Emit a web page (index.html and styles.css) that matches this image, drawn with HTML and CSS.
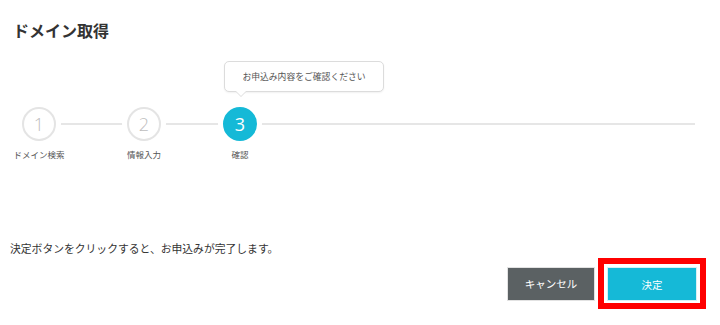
FILE: index.html
```html
<!DOCTYPE html>
<html lang="ja">
<head>
<meta charset="utf-8">
<link rel="stylesheet" href="styles.css">
</head>
<body>
<div class="page">
  <h1 class="title">ドメイン取得</h1>
  <div class="stepper">
    <div class="step step-wide">
      <div class="circle">1</div>
      <div class="label">ドメイン検索</div>
    </div>
    <div class="step">
      <div class="circle">2</div>
      <div class="label">情報入力</div>
    </div>
    <div class="step">
      <div class="tooltip">お申込み内容をご確認ください</div>
      <div class="circle active">3</div>
      <div class="label">確認</div>
    </div>
  </div>
  <p class="message">決定ボタンをクリックすると、お申込みが完了します。</p>
  <div class="actions">
    <button class="btn btn-cancel">キャンセル</button>
    <div class="highlight">
      <button class="btn btn-ok">決定</button>
    </div>
  </div>
</div>
</body>
</html>
```

FILE: styles.css
```css
html, body {
  margin: 0;
  padding: 0;
  background: #fff;
}
.page {
  font-family: "Noto Sans CJK JP", "Noto Sans", sans-serif;
  color: #333;
  padding: 0 14px 0 13px;
}
.title {
  margin: 22px 0 0 0;
  font-size: 16px;
  line-height: 16px;
  font-weight: bold;
  color: #333;
}
.stepper {
  position: relative;
  display: flex;
  gap: 62px;
  margin-top: 69px;
}
.stepper::before {
  content: "";
  position: absolute;
  left: 26px;
  right: 11px;
  top: 16px;
  height: 2px;
  background: #e6e6e6;
}
.step {
  position: relative;
  width: 34px;
  display: flex;
  flex-direction: column;
  align-items: center;
}
.step-wide {
  width: 52px;
}
.circle {
  position: relative;
  box-sizing: border-box;
  width: 34px;
  height: 34px;
  border-radius: 50%;
  border: 2px solid #e4e4e4;
  background: #fff;
  box-shadow: 0 0 0 5px #fff;
  display: flex;
  align-items: center;
  justify-content: center;
  font-family: "Open Sans", "Liberation Sans", sans-serif;
  font-weight: 300;
  font-size: 18px;
  color: #bdbdbd;
}
.circle.active {
  background: #15b9d7;
  border-color: #15b9d7;
  color: #fff;
  font-weight: 400;
}
.label {
  margin-top: 8px;
  font-size: 8.5px;
  line-height: 11px;
  color: #555;
  white-space: nowrap;
}
.tooltip {
  position: absolute;
  left: 1px;
  bottom: 68px;
  box-sizing: border-box;
  width: 160px;
  height: 31px;
  border: 1px solid #dcdcdc;
  border-radius: 5px;
  background: #fff;
  box-shadow: 0 1px 2px rgba(0,0,0,0.06);
  display: flex;
  align-items: center;
  justify-content: center;
  font-size: 8.8px;
  color: #555;
  white-space: nowrap;
}
.tooltip::before,
.tooltip::after {
  content: "";
  position: absolute;
  left: 10px;
  width: 0;
  height: 0;
  border-left: 6px solid transparent;
  border-right: 6px solid transparent;
}
.tooltip::before {
  bottom: -6px;
  border-top: 6px solid #dcdcdc;
}
.tooltip::after {
  bottom: -5px;
  border-top: 6px solid #fff;
}
.message {
  margin: 81px 0 0 -3px;
  font-size: 10.8px;
  line-height: 14px;
  color: #333;
}
.actions {
  display: flex;
  justify-content: flex-end;
  align-items: center;
  gap: 3px;
  margin-top: 3px;
}
.btn {
  box-sizing: border-box;
  height: 34px;
  border: 1px solid #e2e2e2;
  font-family: "Noto Sans CJK JP", "Noto Sans", sans-serif;
  font-size: 10.5px;
  color: #fff;
  padding: 0;
  cursor: pointer;
}
.btn-cancel {
  width: 88px;
  background: #5b6163;
}
.btn-ok {
  display: block;
  width: 90px;
  background: #15b9d7;
  border-color: #d8f1f6;
}
.highlight {
  border: 6px solid #ff0000;
  padding: 3px 3px 2px 3px;
  background: #fff;
}
```
